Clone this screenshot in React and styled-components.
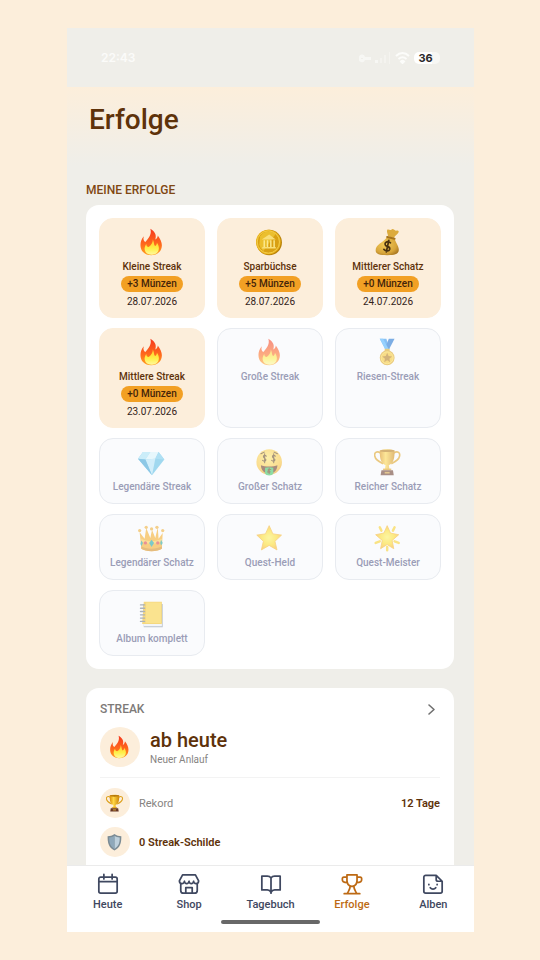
import React from 'react';
import styled, { createGlobalStyle } from 'styled-components';

const GlobalStyle = createGlobalStyle`
  * {
    box-sizing: border-box;
  }

  body {
    margin: 0;
    background-color: #fceedb;
    font-family: Roboto, 'Liberation Sans', sans-serif;
    color: #5e320a;
  }

  h1, h2, p, ul, dl, dd {
    margin: 0;
    padding: 0;
  }
`;

const Page = styled.div`
  height: 100vh;
  padding: 28px 66px 28px 67px;
`;

const Screen = styled.div`
  display: flex;
  flex-direction: column;
  height: 100%;
  background-color: #efeee9;
`;

const StatusBar = styled.div`
  display: flex;
  align-items: center;
  justify-content: space-between;
  flex-shrink: 0;
  height: 59px;
  padding: 0 34px;
  color: #fbfbf9;
`;

const Clock = styled.span`
  font-family: Inter, sans-serif;
  font-size: 12px;
  font-weight: 600;
`;

const StatusIcons = styled.div`
  display: flex;
  align-items: center;
  gap: 4px;
`;

const Battery = styled.span`
  width: 26px;
  padding-right: 3px;
  border-radius: 5px;
  background: linear-gradient(90deg, #ffffff 70%, #f7f7f4 70%);
  color: #2b2b2b;
  font-family: Inter, sans-serif;
  font-size: 11px;
  font-weight: 700;
  line-height: 12px;
  text-align: center;
`;

const Content = styled.main`
  flex: 1;
  min-height: 0;
  overflow-y: auto;
  scrollbar-width: none;
`;

const Header = styled.header`
  height: 78px;
  padding: 16px 22px;
  background: linear-gradient(#fceedb, #efeee9);
`;

const Title = styled.h1`
  font-size: 28px;
  font-weight: 500;
  line-height: 34px;
`;

const Sections = styled.div`
  display: flex;
  flex-direction: column;
  gap: 19px;
  padding: 17px 20px 20px 19px;
`;

const SectionTitle = styled.h2`
  margin-bottom: 7px;
  color: ${({ $muted }) => ($muted ? '#7d7a78' : '#7f4712')};
  font-size: 12px;
  font-weight: 500;
  line-height: 16px;
`;

const Card = styled.div`
  padding: 13px;
  border-radius: 13px;
  background-color: white;
`;

const StreakCard = styled(Card)`
  padding: 13px 14px 28px;
`;

const Grid = styled.ul`
  display: grid;
  grid-template-columns: repeat(3, 1fr);
  gap: 10px 12px;
  list-style: none;
`;

const Tile = styled.li`
  display: flex;
  flex-direction: column;
  align-items: center;
  padding: 9px 4px;
  border: 1px solid ${({ $locked }) => ($locked ? '#e8ebf0' : '#fceedb')};
  border-radius: 14px;
  background-color: ${({ $locked }) => ($locked ? '#fafbfd' : '#fceedb')};
  color: ${({ $locked }) => ($locked ? '#9a9db7' : '#5e320a')};

  svg {
    opacity: ${({ $locked }) => ($locked ? 0.55 : 1)};
  }
`;

const TileName = styled.span`
  margin-top: 4px;
  font-size: 10px;
  font-weight: 500;
  line-height: 14px;
`;

const Reward = styled.span`
  margin-top: 2px;
  padding: 0 6px;
  border-radius: 8px;
  background-color: #f2a024;
  color: #43240a;
  font-size: 10px;
  font-weight: 500;
  line-height: 16px;
`;

const EarnedOn = styled.time`
  margin-top: 3px;
  color: #33231a;
  font-size: 10px;
  line-height: 13px;
`;

const CardHeader = styled.div`
  display: flex;
  justify-content: space-between;
`;

const DetailsButton = styled.button`
  display: flex;
  width: 18px;
  height: 18px;
  padding: 0;
  border: 0;
  background: none;
  color: #707070;
`;

const Bubble = styled.span`
  display: flex;
  align-items: center;
  justify-content: center;
  flex-shrink: 0;
  width: ${({ $size }) => $size}px;
  height: ${({ $size }) => $size}px;
  border-radius: 50%;
  background-color: #fceedb;
`;

const Current = styled.div`
  display: flex;
  align-items: center;
  gap: 10px;
  padding: 3px 0 10px;
  border-bottom: 1px solid #f3f3f3;
`;

const CurrentValue = styled.p`
  font-size: 20px;
  font-weight: 500;
  line-height: 26px;
`;

const Note = styled.p`
  color: #868381;
  font-size: 10px;
  line-height: 14px;
`;

const Stats = styled.dl`
  display: flex;
  flex-direction: column;
  gap: 9px;
  padding-top: 10px;
`;

const Stat = styled.div`
  display: flex;
  align-items: center;
  gap: 9px;
  font-size: 11px;
`;

const StatLabel = styled.dt`
  flex: 1;
  color: ${({ $strong }) => ($strong ? '#5e320a' : '#868381')};
  font-weight: ${({ $strong }) => ($strong ? 600 : 400)};
`;

const StatValue = styled.dd`
  font-weight: 600;
`;

const BottomBar = styled.footer`
  flex-shrink: 0;
  padding: 7px 0 8px;
  border-top: 1px solid #ebebeb;
  background-color: white;
`;

const Tabs = styled.nav`
  display: flex;
`;

const Tab = styled.a`
  display: flex;
  flex: 1;
  flex-direction: column;
  align-items: center;
  gap: 2px;
  color: ${({ $active }) => ($active ? '#bd6a14' : '#3f4860')};
  font-size: 11px;
  font-weight: 500;
  line-height: 16px;
  text-decoration: none;
`;

const HomeIndicator = styled.div`
  width: 99px;
  height: 4px;
  margin: 7px auto 0;
  border-radius: 2px;
  background-color: #686868;
`;

const drawings = {
  fire: (
    <>
      <defs>
        <linearGradient id="flame" x1="0" y1="0" x2="0" y2="1">
          <stop offset="0" stopColor="#f5381f" />
          <stop offset="0.6" stopColor="#ff6a1c" />
          <stop offset="1" stopColor="#ffa21f" />
        </linearGradient>
        <linearGradient id="flameCore" x1="0" y1="0" x2="0" y2="1">
          <stop offset="0" stopColor="#ffc928" />
          <stop offset="0.6" stopColor="#fff04a" />
          <stop offset="1" stopColor="#fff9a0" />
        </linearGradient>
      </defs>
      <path fill="url(#flame)" d="M15 0c5 3 8 7 6 13 2-1 3-3 3-5 3 4 5 8 5 12 0 7-5 12-13 12S3 27 3 20c0-4 1-7 4-11-1 4 0 6 2 7 4-5 8-9 6-16z" />
      <path fill="url(#flameCore)" d="M18 13c2 4 1 7 3 8 1-1 2-2 2-4 2 3 3 6 2 9-1 4-5 5.500-9 5.500S8 29 8 24c0-2 1-4 2-6 0 2 1 4 3 4 3-2 5-5 5-9z" />
    </>
  ),
  coin: (
    <>
      <circle cx="16" cy="16.500" r="15.500" fill="#b98208" />
      <circle cx="15" cy="16" r="15" fill="#e9b21c" />
      <circle cx="15" cy="16" r="13.500" fill="#d9a012" stroke="#f7d454" strokeWidth="1" />
      <path d="M5 9a13 13 0 0 1 19-3L9 27a13 13 0 0 1-5-8z" fill="#f5cf3e" opacity="0.65" />
      <path d="M7 13l9-6 8 6zM8 22h16v2H7z" fill="#f9df79" />
      <path d="M10 14v8m4-8v8m4-8v8m4-8v8" stroke="#fbe88e" strokeWidth="1.800" />
    </>
  ),
  bag: (
    <>
      <defs>
        <radialGradient id="sack" cx="0.4" cy="0.4" r="0.7">
          <stop offset="0" stopColor="#f3cb59" />
          <stop offset="0.7" stopColor="#d8a63a" />
          <stop offset="1" stopColor="#a87722" />
        </radialGradient>
      </defs>
      <path fill="#dcab3e" d="M17 9c0-3-2-5-1-8 2-1 3 1 5 0 2-2 3 0 5 1 1 1 3-1 4 1 0 3-4 5-6 8z" />
      <path fill="url(#sack)" d="M16 10l9 2c2 6 6 10 5 15-1 4-5 5-14 5S2 31 2 26c0-7 9-9 14-16z" />
      <path d="M16 10l9 2" stroke="#a5731d" strokeWidth="2.500" strokeLinecap="round" />
      <path d="M20 17c-4-3-8 0-6 3 2 2 6 1 5 5-1 3-5 2-7 0M18 14l-3 14" fill="none" stroke="#49320f" strokeWidth="2.100" strokeLinecap="round" />
    </>
  ),
  medal: (
    <>
      <path fill="#2b93f0" d="M7 0h8l4 12-4 3z" />
      <path fill="#176fd0" d="M25 0h-7l-5 12 4 3z" />
      <path fill="#45b0ff" d="M7 0h4l7 13-3 2z" />
      <rect x="13" y="12" width="6" height="4" rx="1" fill="#d7a81c" />
      <circle cx="16" cy="23" r="9" fill="#dca216" />
      <circle cx="16" cy="23" r="7.300" fill="#f7c528" stroke="#ffe057" />
      <path fill="#b57a10" d="M16 17l1.700 4 4.300.4-3.300 2.700 1 4.400-3.700-2.400-3.700 2.400 1-4.400-3.300-2.700 4.300-.4z" />
    </>
  ),
  gem: (
    <>
      <path fill="#58bde5" d="M6 4h19l7 9-15 19L0 12z" />
      <path fill="#a5e2f7" d="M6 4h9l-6 9-9-1z" />
      <path fill="#d9f4fc" d="M15 4h10l-4 8-12 1z" />
      <path fill="#73caed" d="M25 4l7 9-11-1z" />
      <path fill="#b3e5f8" d="M9 13l12-1-4 20z" />
      <path fill="#359fd4" d="M0 12l9 1 8 19z" />
    </>
  ),
  moneyFace: (
    <>
      <defs>
        <radialGradient id="face" cx="0.45" cy="0.35" r="0.7">
          <stop offset="0" stopColor="#ffe86a" />
          <stop offset="0.75" stopColor="#fac334" />
          <stop offset="1" stopColor="#e89418" />
        </radialGradient>
      </defs>
      <circle cx="16" cy="16" r="15.500" fill="url(#face)" />
      <path d="M6 20c4 2 16 2 20 0 0 6-4 10-10 10S6 26 6 20z" fill="#633018" />
      <path d="M11 23c3-1 7-1 10 0v7c-1 3-9 3-10 0z" fill="#35c45c" />
      <path d="M12.500 9c-3-3-5 1-2 2.500s1 5-2.500 2.500M10.500 6v11M23.500 9c-3-3-5 1-2 2.500s1 5-2.500 2.500M21.500 6v11M18 25c-4-1-4 1-2 2s1 2-2 1M16 23v7M6 6l4-2M22 4l4 2" fill="none" stroke="#604017" strokeWidth="1.300" strokeLinecap="round" />
    </>
  ),
  trophy: (
    <>
      <defs>
        <linearGradient id="cup">
          <stop offset="0" stopColor="#d98f0b" />
          <stop offset="0.4" stopColor="#ffd746" />
          <stop offset="1" stopColor="#cc8507" />
        </linearGradient>
      </defs>
      <path d="M8 5C3 2 0 5 1 9c1 5 6 7 10 9M24 5c5-3 8 0 7 4-1 5-6 7-10 9" fill="none" stroke="#dda01b" strokeWidth="2" />
      <path fill="url(#cup)" d="M7 2c4-2 14-2 18 0 0 10-1 15-7 18l1 6h-6l1-6C8 17 7 12 7 2z" />
      <ellipse cx="16" cy="2.500" rx="9" ry="1.500" fill="#b67708" />
      <path fill="#dda01b" d="M11 24h10v2H11z" />
      <path fill="#663626" d="M9 26h14l1 6H8z" />
      <path fill="#d3a03a" d="M13 28h6v2h-6z" />
    </>
  ),
  crown: (
    <>
      <path fill="#f5ab20" d="M2 9l6 8 2-13 5 12 2-10 4 10 3-13 1 14 5-7-1 19c-5 4-20 4-25 0z" />
      <path fill="#d48918" d="M4 26c5 4 19 4 25 0v3c-5 4-20 4-25 0z" />
      <path fill="#fcc94a" d="M4 17c6 4 18 4 25 0v3c-6 4-19 4-25 0z" />
      <circle cx="2" cy="7" r="2" fill="#efac2e" />
      <circle cx="10" cy="3" r="2" fill="#efac2e" />
      <circle cx="16.500" cy="5" r="2" fill="#efac2e" />
      <circle cx="23" cy="3" r="2" fill="#efac2e" />
      <circle cx="30" cy="7" r="2" fill="#efac2e" />
      <path fill="#15a3a0" d="M16.500 18l3 4-3 5-3-5zM4 19l2 3-2 4-1-3zM28 18l2 4-2 3-1-3z" />
      <circle cx="9" cy="22" r="2" fill="#dc3b40" />
      <circle cx="24" cy="22" r="2" fill="#dc3b40" />
    </>
  ),
  star: (
    <>
      <defs>
        <radialGradient id="starFill">
          <stop offset="0" stopColor="#fff258" />
          <stop offset="0.6" stopColor="#ffdc20" />
          <stop offset="1" stopColor="#f9b41c" />
        </radialGradient>
      </defs>
      <path fill="url(#starFill)" stroke="#f5b01c" strokeLinejoin="round" d="M16 1l4.500 10L31 12.500l-8 7.500 2.500 10.500L16 25l-9.500 5.500L9 20l-8-7.500L11.500 11z" />
    </>
  ),
  glowStar: (
    <>
      <path d="M7 3l2 4M25 3l-2 4M2 22l5-2M30 22l-5-2M16 27v4" stroke="#f9d024" strokeWidth="3" strokeLinecap="round" />
      <path fill="url(#starFill)" stroke="#f5b01c" strokeLinejoin="round" d="M16 1l4 9 10 2-8 7 2 10-8-5-8 5 2-10-8-7 10-2z" />
    </>
  ),
  notebook: (
    <>
      <path fill="#8795a6" d="M6 4h24v28H7z" />
      <path fill="#edf1f5" d="M6 27h23v4H7z" />
      <path fill="#f2bc18" d="M7 1h22v27H5z" />
      <path fill="#fbd036" d="M10 2h18v25H9z" />
      <path d="M3 5h5M3 9h5M3 13h5M3 17h5M3 21h5M3 25h5" stroke="#6b7787" strokeWidth="1.600" strokeLinecap="round" />
    </>
  ),
  shield: (
    <>
      <path fill="#7b8b94" d="M16 1c4 3 8 4 13 4 0 13-2 21-13 27C5 26 3 18 3 5c5 0 9-1 13-4z" />
      <path fill="#bdd0dc" d="M16 4c3 2 6 3 10 3.500C26 18 24 24 16 29z" />
      <path fill="#8ea8ba" d="M16 4c-3 2-6 3-10 3.500C6 18 8 24 16 29z" />
    </>
  ),
};

const Emoji = ({ name, size = 28 }) => (
  <svg width={size} height={size} viewBox="0 -1 34 34" aria-hidden="true">
    {drawings[name]}
  </svg>
);

const tabIcons = {
  calendar: <path d="M4 4.500h16a2 2 0 0 1 2 2V20a2 2 0 0 1-2 2H4a2 2 0 0 1-2-2V6.500a2 2 0 0 1 2-2zM2 9.500h20M7.500 1.500v5M16.500 1.500v5" />,
  shop: <path d="M5 2h14l3.500 6.500c0 4-5 4-5.500.5-.5 3.500-4.500 3.500-5 0-.5 3.500-4.500 3.500-5 0-.5 3.500-5.500 3.500-5.500-.5zM3 11.500V19a3 3 0 0 0 3 3h12a3 3 0 0 0 3-3v-7.500M8.500 22v-6h7v6" />,
  book: <path d="M12 5.500C11 4 10 3.500 8 3.500H2v15h6c2 0 3 .5 4 2.500 1-2 2-2.500 4-2.500h6v-15h-6c-2 0-3 .5-4 2zM12 5.500V22" />,
  cup: <path d="M6.500 2h11v6c0 4-2 6.500-5.500 6.500S6.500 12 6.500 8zM6.500 4.500H3c-2 0-2 4-.5 5s3 1 4.500 1M17.500 4.500H21c2 0 2 4 .5 5s-3 1-4.500 1M10 14.500c0 3-1 4-3 7.500M14 14.500c0 3 1 4 3 7.500M3.500 22.500h17" />,
  sticker: <path d="M4 2.500h11.500L22 9v11a2 2 0 0 1-2 2H4a2 2 0 0 1-2-2V4.500a2 2 0 0 1 2-2zM15.500 2.500V7a2 2 0 0 0 2 2H22M7.500 12.500v.2M16.500 12.500v.2M9 16c1.500 2 4.500 2 6 0" />,
};

const TabIcon = ({ name }) => (
  <svg width="22" height="22" viewBox="0 0 24 24" fill="none" stroke="currentColor" strokeWidth="1.900" strokeLinecap="round" strokeLinejoin="round" aria-hidden="true">
    {tabIcons[name]}
  </svg>
);

const achievements = [
  { name: 'Kleine Streak', icon: 'fire', coins: 3, date: '28.07.2026' },
  { name: 'Sparbüchse', icon: 'coin', coins: 5, date: '28.07.2026' },
  { name: 'Mittlerer Schatz', icon: 'bag', coins: 0, date: '24.07.2026' },
  { name: 'Mittlere Streak', icon: 'fire', coins: 0, date: '23.07.2026' },
  { name: 'Große Streak', icon: 'fire' },
  { name: 'Riesen-Streak', icon: 'medal' },
  { name: 'Legendäre Streak', icon: 'gem' },
  { name: 'Großer Schatz', icon: 'moneyFace' },
  { name: 'Reicher Schatz', icon: 'trophy' },
  { name: 'Legendärer Schatz', icon: 'crown' },
  { name: 'Quest-Held', icon: 'star' },
  { name: 'Quest-Meister', icon: 'glowStar' },
  { name: 'Album komplett', icon: 'notebook' },
];

const tabs = [
  { label: 'Heute', icon: 'calendar' },
  { label: 'Shop', icon: 'shop' },
  { label: 'Tagebuch', icon: 'book' },
  { label: 'Erfolge', icon: 'cup', active: true },
  { label: 'Alben', icon: 'sticker' },
];

const Achievement = ({ name, icon, coins, date }) => (
  <Tile $locked={!date}>
    <Emoji name={icon} />
    <TileName>{name}</TileName>
    {date && (
      <>
        <Reward>+{coins} Münzen</Reward>
        <EarnedOn dateTime={date.split('.').reverse().join('-')}>{date}</EarnedOn>
      </>
    )}
  </Tile>
);

const App = () => (
  <>
    <GlobalStyle />
    <Page>
      <Screen>
        <StatusBar>
          <Clock>22:43</Clock>
          <StatusIcons>
            <svg width="32" height="12" viewBox="0 0 32 12" fill="#f7f7f4" aria-hidden="true">
              <path fillRule="evenodd" d="M0 6a3 3 0 0 1 6-1h6v3H6a3 3 0 0 1-6-2zM2 6h2v1H2z" />
              <path d="M16 8h3v3h-3z" />
              <path d="M21 6h2v5h-2zM25 3h2v8h-2zM30 0h1v12h-1z" opacity="0.6" />
            </svg>
            <svg width="15" height="12" viewBox="0 0 15 12" fill="none" stroke="#fcfcfa" strokeWidth="2" aria-hidden="true">
              <path d="M1 4c4-4 9-4 13 0M3.500 7c3-2.500 5-2.500 8 0M6 9.500c1-1 2-1 3 0L7.500 11z" />
            </svg>
            <Battery>36</Battery>
          </StatusIcons>
        </StatusBar>
        <Content>
          <Header>
            <Title>Erfolge</Title>
          </Header>
          <Sections>
            <section>
              <SectionTitle>MEINE ERFOLGE</SectionTitle>
              <Card>
                <Grid>
                  {achievements.map((item) => (
                    <Achievement key={item.name} {...item} />
                  ))}
                </Grid>
              </Card>
            </section>
            <StreakCard>
              <CardHeader>
                <SectionTitle $muted>STREAK</SectionTitle>
                <DetailsButton type="button" aria-label="Streak anzeigen">
                  <svg width="18" height="18" viewBox="0 0 18 18" fill="none" stroke="currentColor" strokeWidth="1.600" strokeLinecap="round" strokeLinejoin="round">
                    <path d="M7 4l5 4.500L7 13" />
                  </svg>
                </DetailsButton>
              </CardHeader>
              <Current>
                <Bubble $size={40}>
                  <Emoji name="fire" size={24} />
                </Bubble>
                <div>
                  <CurrentValue>ab heute</CurrentValue>
                  <Note>Neuer Anlauf</Note>
                </div>
              </Current>
              <Stats>
                <Stat>
                  <Bubble $size={30}>
                    <Emoji name="trophy" size={18} />
                  </Bubble>
                  <StatLabel>Rekord</StatLabel>
                  <StatValue>12 Tage</StatValue>
                </Stat>
                <Stat>
                  <Bubble $size={30}>
                    <Emoji name="shield" size={18} />
                  </Bubble>
                  <StatLabel $strong>0 Streak-Schilde</StatLabel>
                </Stat>
              </Stats>
            </StreakCard>
          </Sections>
        </Content>
        <BottomBar>
          <Tabs>
            {tabs.map(({ label, icon, active }) => (
              <Tab key={label} href={`#${label.toLowerCase()}`} $active={active} aria-current={active ? 'page' : undefined}>
                <TabIcon name={icon} />
                {label}
              </Tab>
            ))}
          </Tabs>
          <HomeIndicator />
        </BottomBar>
      </Screen>
    </Page>
  </>
);

export default App;
